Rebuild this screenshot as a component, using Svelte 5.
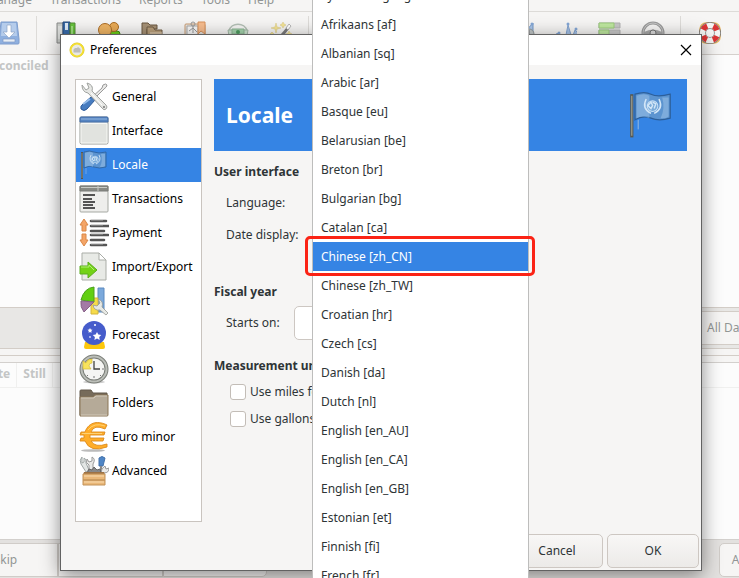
<script>
	const menus = ['Manage', 'Transactions', 'Reports', 'Tools', 'Help']

	const tools = [
		'save', '|',
		'books', 'users', 'categories', 'board', 'budget', 'wand', '|',
		'chart', 'chart', 'chart', 'chart', '|',
		'scale', 'chart', 'bars', 'wheel', '|',
		'buoy'
	]

	const pages = [
		['General', 'general'],
		['Interface', 'interface'],
		['Locale', 'flag'],
		['Transactions', 'transactions'],
		['Payment', 'payment'],
		['Import/Export', 'transfer'],
		['Report', 'report'],
		['Forecast', 'forecast'],
		['Backup', 'backup'],
		['Folders', 'folder'],
		['Euro minor', 'euro'],
		['Advanced', 'advanced']
	]

	const languages = [
		'System language', 'Afrikaans [af]', 'Albanian [sq]', 'Arabic [ar]', 'Basque [eu]',
		'Belarusian [be]', 'Breton [br]', 'Bulgarian [bg]', 'Catalan [ca]', 'Chinese [zh_CN]',
		'Chinese [zh_TW]', 'Croatian [hr]', 'Czech [cs]', 'Danish [da]', 'Dutch [nl]',
		'English [en_AU]', 'English [en_CA]', 'English [en_GB]', 'Estonian [et]', 'Finnish [fi]',
		'French [fr]'
	]

	let page = $state('Locale')
	let language = $state('Chinese [zh_CN]')
	let day = $state(1)
	let miles = $state(false)
	let gallons = $state(false)

	// toolbar icons, 24x24
	const toolIcons = {
		save: `<path d="M4 1h16l2 17v4q0 1-1 1H3q-1 0-1-1v-4z" fill="#8fb0df" stroke="#7f9dcc"/><path d="M5 2h14l1 13H4z" fill="#b5cceb"/><path d="M10 4h4v7h4l-6 6-6-6h4z" fill="#fff" stroke="#8ea5c5" stroke-width=".7"/><path d="M6 18h12v3H6z" fill="#e8eef5" stroke="#7f9ac4" stroke-width=".7"/>`,
		books: `<path d="M3 2h6v20H3z" fill="#c9ccc8" stroke="#888"/><path d="M5 5v13M7 5v13" stroke="#eee"/><path d="M9 1h7v22H9z" fill="#396aa8" stroke="#24497a"/><path d="M11 2h3v7h-3z" fill="#dce8f5"/><path d="M16 2h5v20h-5z" fill="#65c33b" stroke="#558c37"/><path d="M18 5v15" stroke="#d4f5bd"/>`,
		users: `<rect x="12" y="10" width="11" height="10" rx="3" fill="#6cd018" stroke="#3c8d0c"/><circle cx="17" cy="6" r="4.500" fill="#e9aa55" stroke="#a96c22"/><rect x="1" y="15" width="14" height="8" rx="3" fill="#6ca1da" stroke="#3f6ea8"/><circle cx="8" cy="9" r="6.500" fill="#efb565" stroke="#ac6d26"/>`,
		categories: `<path d="M2 18V2h6l2 2h7v4H7v10z" fill="#a69175" stroke="#695641"/><path d="M7 22V6h6l2 3h7v13z" fill="#b99f7b" stroke="#705c44"/><path d="M10 12h12M10 14h12" stroke="#e7d7c0"/>`,
		board: `<rect x="2" y="3" width="20" height="19" rx="1" fill="#e6e3df" stroke="#c99b72"/><path d="M4 5h11v15H4z" fill="#f8f8f8" stroke="#aaa"/><circle cx="10" cy="3" r="2" fill="none" stroke="#999"/><path d="M10 5v7M6 10l4-3 4 4" fill="none" stroke="#999"/><path d="M15 1h7v12l-4-3-3 3z" fill="#f7bd8f" stroke="#d8925d"/>`,
		budget: `<path d="M3 10C5 1 19 1 21 10" fill="none" stroke="#b3bfb5" stroke-width="1.500"/><path d="M2 9h20l-2 12H4z" fill="#cfe6d2" stroke="#a4b9a7"/><path d="M6 8h12v5H6z" fill="#a5d4ad" stroke="#8db694"/><circle cx="12" cy="11" r="2" fill="#4f9c60"/>`,
		wand: `<path d="m5 21 13-15 2 2L8 23z" fill="#7c7c7c"/><path d="m17 7 3-4 2 2-3 4z" fill="#fff" stroke="#999" stroke-width=".7"/><path d="m7 2 1 4 4 1-4 1-1 4-1-4-4-1 4-1zM14 1l1 2 2 1-2 1-1 2-1-2-2-1 2-1zM20 10l1 2 2 1-2 1-1 2-1-2-2-1 2-1zM3 11l1 1 1 1-1 1-1 1-1-1-1-1 1-1z" fill="#f5e493" stroke="#d8c67c" stroke-width=".5"/>`,
		chart: `<path d="M1 21v-8l3-1 3 5 4-3L13 4l4 13 3-8 2 2v10z" fill="#a5c2e7"/><path d="m1 13 3-1 3 5 4-3L13 4l4 13 3-8 2 2" fill="none" stroke="#83a3cf"/><circle cx="13" cy="3" r="1.500" fill="#83a6d5"/><circle cx="21" cy="8" r="1.500" fill="#83a6d5"/><circle cx="4" cy="12" r="1.500" fill="#83a6d5"/>`,
		scale: `<path d="M3 22 21 2v20z" fill="#a8c5ea" stroke="#7597c3"/><circle cx="20" cy="3" r="1.500" fill="#83a6d5"/><circle cx="17" cy="13" r="5" fill="#c2c7c8" stroke="#92999a"/><path d="M17 9v5h4" fill="none" stroke="#777"/>`,
		bars: `<path d="M1 2h21v5H1zM1 9h21v5H1zM1 16h21v5H1z" fill="#c8c8c8" stroke="#b3b3b3"/><path d="M1 2h15v5H1zM1 9h10v5H1zM1 16h18v5H1z" fill="#bfe8a0" stroke="#9ccc7c"/>`,
		wheel: `<circle cx="12" cy="12" r="10" fill="none" stroke="#9b9b9b" stroke-width="3"/><circle cx="12" cy="12" r="10" fill="none" stroke="#c7c7c7"/><path d="M3 11q9-5 18 0v3l-6 1-2 7h-2l-2-7-6-1z" fill="#aaa"/><circle cx="12" cy="12" r="3" fill="#ddd" stroke="#777"/>`,
		buoy: `<rect x="2" y="2" width="20" height="20" rx="6" fill="none" stroke="#edb65c" stroke-width="1.500"/><circle cx="12" cy="12" r="7.500" fill="none" stroke="#777" stroke-width="7"/><circle cx="12" cy="12" r="7.500" fill="none" stroke="#f5f5f3" stroke-width="5.500"/><circle cx="12" cy="12" r="7.500" fill="none" stroke="#db3535" stroke-width="5.500" stroke-dasharray="5.500 6.280" stroke-dashoffset="-3.200"/>`
	}

	const flag = `<path d="M2 2h2v27H2z" fill="#565852"/><path d="M3 3v25" stroke="#a3a598" stroke-width=".7"/><path d="M5 2q6-2 10 0t12 0v15q-7 2-12 0t-10 1z" fill="#5c94d0" stroke="#2c5f9b" stroke-width=".8"/><path d="M6 3q5-2 8 0v14q-4-2-8 0zM22 4q2 7-1 13h3l2-1V4z" fill="#b6d6f0" opacity=".38"/><circle cx="16" cy="9.500" r="3.300" fill="#79abd9" stroke="#c6dff5" stroke-width=".7"/><path d="M12 5q-3 6 3 9M20 5q3 6-3 9M13 9l2-2 1 2-1 2zM16 7l2 1-1 3" fill="none" stroke="#d3e6f7" stroke-width=".9"/><path d="M7 18v6" stroke="#99bce4" stroke-width=".6"/>`

	// page icons, 30x30
	const pageIcons = {
		general: `<path d="M24 3q3-2 4 0 0 2-3 4L14 18l-2-2L23 6z" fill="#e9e9e7" stroke="#999"/><path d="m12 15 4 3-8 9q-3 3-6 0-1-3 2-5z" fill="#467cc0" stroke="#2c5a98"/><path d="m4 22 7-5" stroke="#96bce8" stroke-width="2"/><path d="M3 3q0 7 6 8l14 15q2 3 4 1t0-4L13 9q2-6-5-8l2 5-3 2z" fill="#e6e7e4" stroke="#a0a3a0"/><circle cx="25" cy="25" r="1" fill="#777"/><path d="m12 11 11 12" stroke="#fff"/>`,
		interface: `<rect x="1" y="1" width="28" height="27" rx="1.500" fill="#e1e3df" stroke="#999c97"/><path d="M1 6V2q0-1 1-1h26q1 0 1 1v4z" fill="#5685c2" stroke="#446fa9"/><path d="M2 3h26" stroke="#94b7e0"/><path d="M2 7.500h26V27H2z" fill="none" stroke="#f7f8f5"/>`,
		flag,
		transactions: `<rect x="1" y="2" width="28" height="26" rx="1" fill="#eeeeec" stroke="#a6a9a3"/><path d="M1 2h28v5H1z" fill="#888a85" stroke="#797b76"/><path d="M19 2v5M2 3.500h26" stroke="#c8cac5"/><path d="M4 11h12M4 15h9M4 18h12M4 21h10M4 24h12" stroke="#222" stroke-width="1.600"/>`,
		payment: `<path d="m5 1 4 6H7v6H3V7H1zM3 16h4v6h2l-4 6-4-6h2z" fill="#f4a567" stroke="#da8848" stroke-linejoin="round"/><path d="M12 3h15M12 8h18M12 13h13M12 17h17M12 22h13M12 27h15" stroke="#555" stroke-width="2.600" stroke-linecap="round"/><path d="M12 2.500h12M12 7.500h12M12 16.500h12M12 26.500h12" stroke="#999" stroke-width=".6"/>`,
		transfer: `<path d="M3 1h17l7 7v20H3z" fill="#e8eae6" stroke="#aaada7"/><path d="M20 1v7h7z" fill="#fff" stroke="#aaada7"/><path d="M1 14h8v-4l9 8-9 8v-4H1z" fill="#73d216" stroke="#5bad1c"/><path d="M2 15h8v-2l5 5" fill="none" stroke="#b1ef75"/>`,
		report: `<path d="M19 2h6v24h-6z" fill="#7ba9dc" stroke="#5c8ac0"/><path d="M12 12h7v16h-7z" fill="#f6db4a" stroke="#d4b63c"/><path d="M15 16V1Q5 2 2 14z" fill="#62cf12" stroke="#4aa01c"/><path d="M15 16 2 15q-1 6 3 11z" fill="#a47aa5" stroke="#876088"/><path d="m19 13 2 4-3 3-4-1q1 6 7 5l6 5 2-2-6-6q2-6-4-8z" fill="#e7e9e5" stroke="#959893" stroke-width=".8"/>`,
		forecast: `<path d="M6 22h19l1 5q0 2-2 2H7q-2 0-2-2z" fill="#fdc70c"/><circle cx="15" cy="13" r="12" fill="#465ccb"/><path d="m18 12 1.300 2.600 3 .4-2.100 2 .5 3-2.700-1.400-2.600 1.400.5-3-2.200-2 3-.4zM11 8l.8 1.500 1.700.3-1.200 1.200.3 1.700-1.600-.8-1.500.8.3-1.700L8.500 9.800l1.700-.3z" fill="#fff"/><circle cx="16" cy="5" r="1" fill="#fff"/><circle cx="11" cy="17" r=".9" fill="#d5dafb"/>`,
		backup: `<ellipse cx="15" cy="28" rx="11" ry="1.500" fill="#ccc"/><circle cx="15" cy="15" r="12.500" fill="#f5f5f3" stroke="#7a7d77" stroke-width="4"/><circle cx="15" cy="15" r="12.500" fill="none" stroke="#bbbeb8" stroke-width="2"/><path d="M15 7v8h6" fill="none" stroke="#444" stroke-width="1.300"/><path d="M15 22v2M23 15h2M22 22l-1-1M8 22l1-1" stroke="#777"/><path d="M13 5q-5 0-6 4L4 7v8h8l-2-3q0-3 3-3z" fill="#f8e35d" stroke="#d4bb3a" stroke-width=".7"/>`,
		folder: `<path d="M1 27V3q0-1 1-1h10l2 3h14v5z" fill="#766b5a" stroke="#62594b"/><path d="M1 9h13l2-2h13v20q0 1-1 1H1z" fill="#b5aa98" stroke="#8b7657"/><path d="M2 10h13l2-2h11M2 27h26" fill="none" stroke="#d1c8b9"/>`,
		euro: `<ellipse cx="14" cy="28.500" rx="12" ry="1.300" fill="#bbb"/><path d="M28 3l-2 4Q15 2 12 10h14l-1 3H11v3h14l-1 3H12q4 7 16 3v3q-17 6-22-6H1l1-3h3v-3H1l1-3h4C10-1 20-1 28 3z" fill="#ffad28" stroke="#dd8a1c" stroke-width=".9" stroke-linejoin="round"/><path d="M9 8q6-8 17-4M3 11.500h20" fill="none" stroke="#ffdb86" stroke-width=".8"/>`,
		advanced: `<path d="M3 1q-3 3-1 7l5 8 3-2-3-7q1-4-2-5v4l-2 1z" fill="#e3e6e5" stroke="#a0a7a6"/><path d="m8 3 2 3 3-1V1q4 2 1 7v7h-4V9Q6 7 8 3z" fill="#e9e9e7" stroke="#999"/><path d="M20 2q3-3 6 0l-2 8h-4z" fill="#4f86c6" stroke="#4271aa"/><path d="M22 10v7" stroke="#888" stroke-width="2"/><path d="m26 10 1 3 3-1q0 5-5 5h-3q0-5 4-7z" fill="#e9e9e7" stroke="#999"/><path d="M8 17l2-4 3 1 2-3 3 3 3-1 1 4z" fill="#888" stroke="#666"/><path d="m5 16-1 3h22l-1-3z" fill="#9d7245"/><path d="M4 18h22v6H4zM4 24h22v5H4z" fill="#eab879" stroke="#c29259"/><path d="M5 20h20M5 26h20" stroke="#f9dcb2"/>`
	}
</script>

<div class="app">
	<div class="main" inert>
		<nav class="menubar">
			{#each menus as menu}
				<button>{menu}</button>
			{/each}
		</nav>
		<div class="toolbar">
			{#each tools as tool}
				{#if tool === '|'}
					<span class="sep"></span>
				{:else}
					<button aria-label={tool}><svg viewBox="0 0 24 24" width="24" height="24">{@html toolIcons[tool]}</svg></button>
				{/if}
			{/each}
		</div>
		<div class="accounts">
			<strong>Reconciled</strong>
		</div>
		<div class="filter">
			<button>All Dates</button>
		</div>
		<div class="gap"></div>
		<div class="upcoming">
			<div class="columns">
				<strong>Late</strong>
				<strong>Still</strong>
			</div>
		</div>
		<div class="actions">
			<button class="skip">Skip</button>
			<button class="edit">Edit</button>
			<button class="post">Post</button>
			<span class="grow"></span>
			<button class="add">Add</button>
		</div>
	</div>

	<div class="dialog" role="dialog" aria-labelledby="title">
		<header>
			<svg viewBox="0 0 16 16" width="16" height="16">
				<circle cx="8" cy="8" r="7" fill="#e9e9e3" stroke="#d8c51c" />
				<circle cx="8" cy="8" r="6.200" fill="none" stroke="#f5df2e" stroke-width="1.600" />
				<path d="M4.500 7.500 6 6h2l1-1 2.500 2v3.500h-7z" fill="#bcbcb9" />
			</svg>
			<span id="title">Preferences</span>
			<button class="close" aria-label="Close">
				<svg viewBox="0 0 12 12" width="12" height="12"><path d="m1 1 10 10M11 1 1 11" stroke="#000" stroke-width="1.200" /></svg>
			</button>
		</header>

		<div class="body">
			<nav class="pages">
				{#each pages as [name, icon]}
					<button class:active={page === name} onclick={() => page = name}>
						<svg viewBox="0 0 30 30" width="30" height="30">{@html pageIcons[icon]}</svg>
						{name}
					</button>
				{/each}
			</nav>

			<section>
				<div class="banner">
					<h1>{page}</h1>
					<svg viewBox="0 0 30 30" width="48" height="48">{@html flag}</svg>
				</div>

				<h2>User interface</h2>
				<div class="row">
					<label for="language">Language:</label>
					<select id="language" bind:value={language}>
						{#each languages as lang}
							<option>{lang}</option>
						{/each}
					</select>
				</div>
				<div class="row">
					<label for="date">Date display:</label>
					<input id="date" type="text" value="%x">
				</div>

				<h2 class="fiscal">Fiscal year</h2>
				<div class="row start">
					<label for="day">Starts on:</label>
					<input id="day" class="day" type="text" bind:value={day}>
				</div>

				<h2 class="units">Measurement units</h2>
				<label class="check"><input type="checkbox" bind:checked={miles}>Use miles for meter</label>
				<label class="check"><input type="checkbox" bind:checked={gallons}>Use gallons for fuel</label>
			</section>
		</div>

		<footer>
			<button>Cancel</button>
			<button>OK</button>
		</footer>
	</div>

	<ul class="popup" role="listbox" aria-label="Language">
		{#each languages as lang}
			<li role="option" aria-selected={language === lang}>
				<button onclick={() => language = lang}>{lang}</button>
			</li>
		{/each}
	</ul>
</div>

<style>
:global(body) {
	background: #f6f5f4;
}
.app {
	position: relative;
	height: 100vh;
	overflow: hidden;
	font: 12px/18px 'Noto Sans', 'Open Sans', sans-serif;
	color: #2e3436;
}
.app * {
	box-sizing: border-box;
}
button {
	font: inherit;
	color: inherit;
	background: none;
	border: 0;
	padding: 0;
}
svg {
	display: block;
	flex: none;
}

.main {
	display: flex;
	flex-direction: column;
	height: 100%;
	color: #929595;
	background: #f6f5f4;
}
.menubar {
	display: flex;
	gap: 18px;
	height: 12px;
	margin-left: -14px;
	border-bottom: 1px solid #dddbd8;
}
.menubar button {
	height: 18px;
	margin-top: -9px;
}
.toolbar {
	display: flex;
	align-items: center;
	height: 43px;
	margin-left: -13px;
	border-bottom: 1px solid #d5d0cc;
}
.toolbar button {
	display: flex;
	flex: none;
	justify-content: center;
	width: 43px;
}
.sep {
	flex: none;
	width: 1px;
	height: 34px;
	margin: 0 7px 0 6px;
	background: #dddbd8;
}
.accounts {
	flex: 252;
	margin-left: -16px;
	padding-top: 2px;
	background: #fcfcfc;
	color: #c3c5c5;
}
.filter {
	display: flex;
	justify-content: flex-end;
	height: 42px;
	padding: 3px 0;
	background: #e8e7e5;
	border: solid #d3cdc7;
	border-width: 1px 0;
}
.filter button {
	width: 120px;
	margin-right: -32px;
	padding-left: 55px;
	text-align: left;
	background: #f6f5f4;
	border: 1px solid #d3cdc7;
}
.gap {
	height: 7px;
	border-bottom: 1px solid #d3cdc7;
}
.upcoming {
	flex: 178;
	margin-top: 6px;
	background: #fcfcfc;
	border: solid #d3d0cd;
	border-width: 1px 0;
}
.columns {
	display: flex;
	height: 25px;
	margin-left: -22px;
	color: #c3c5c5;
	border-bottom: 1px solid #f0f0ef;
}
.columns strong {
	padding: 2px 6px;
	border-right: 1px solid #f0f0ef;
}
.actions {
	display: flex;
	height: 38px;
	padding: 3px 0 1px;
	background: #e3e1df;
}
.actions button {
	background: #f6f5f4;
	border: 1px solid #d0ccc8;
}
.skip {
	width: 105px;
	margin-left: -47px;
}
.edit {
	width: 105px;
}
.actions .post {
	width: 104px;
	border-radius: 0 5px 5px 0;
}
.grow {
	flex: 1;
}
.actions .add {
	width: 48px;
	margin-right: -28px;
	border-radius: 5px;
}

.dialog {
	position: absolute;
	top: 34px;
	left: 60px;
	right: 37px;
	background: #f6f5f4;
	border: 1px solid #626262;
	box-shadow: 0 4px 18px rgba(0, 0, 0, .45);
}
header {
	display: flex;
	align-items: center;
	gap: 5px;
	height: 30px;
	padding: 0 9px 1px 8px;
	color: #000;
	background: #fff;
}
.close {
	margin-left: auto;
}
.body {
	display: flex;
	gap: 12px;
	padding: 14px 14px 12px;
}
.pages {
	flex: none;
	width: 127px;
	height: 443px;
	color: #000;
	background: #fff;
	border: 1px solid #c9c4bf;
}
.pages button {
	display: flex;
	align-items: center;
	gap: 3px;
	width: 100%;
	height: 34px;
	padding-left: 3px;
	white-space: nowrap;
}
.pages .active {
	color: #fff;
	background: #3584e4;
}
section {
	flex: 1;
	min-width: 0;
}
.banner {
	display: flex;
	align-items: center;
	justify-content: space-between;
	height: 72px;
	padding: 0 12px;
	color: #fff;
	background: #3584e4;
}
h1 {
	margin: 0;
	font-size: 21px;
	line-height: 28px;
}
h2 {
	margin: 12px 0 6px;
	font-size: 12px;
	line-height: 18px;
	white-space: nowrap;
}
.row {
	display: flex;
	align-items: center;
	gap: 4px;
	height: 32px;
	padding-left: 12px;
}
.row label {
	flex: none;
	width: 84px;
}
.row select, .row input {
	width: 200px;
	height: 28px;
	font: inherit;
	background: #fff;
	border: 1px solid #cdc7c2;
	border-radius: 5px;
}
.fiscal {
	margin-top: 32px;
}
.start label {
	width: 64px;
}
.row .day {
	width: 120px;
	height: 34px;
	padding: 0 24px;
}
.units {
	margin: 18px 0 3px;
}
.check {
	display: flex;
	align-items: center;
	gap: 4px;
	height: 27px;
	padding-left: 16px;
	white-space: nowrap;
}
.check input {
	appearance: none;
	width: 16px;
	height: 16px;
	margin: 0;
	background: #fff;
	border: 1px solid #c3bdb7;
	border-radius: 3px;
}
footer {
	display: flex;
	justify-content: flex-end;
	gap: 4px;
	padding: 0 2px 2px;
}
footer button {
	width: 92px;
	height: 34px;
	background: linear-gradient(#f8f7f6, #eceae8);
	border: 1px solid #cdc7c2;
	border-radius: 5px;
}

.popup {
	position: absolute;
	top: -19px;
	left: 312px;
	width: 217px;
	margin: 0;
	padding: 0;
	list-style: none;
	background: #fff;
	border: solid #bdbdbc;
	border-width: 0 1px;
}
.popup li {
	position: relative;
	height: 29px;
}
.popup button {
	width: 100%;
	height: 29px;
	padding-left: 8px;
	text-align: left;
}
.popup [aria-selected='true'] {
	color: #fff;
	background: #3584e4;
}
.popup [aria-selected='true']::after {
	content: '';
	position: absolute;
	inset: -6px -7px -5px -8px;
	border: 3px solid #fb2315;
	border-radius: 5px;
	pointer-events: none;
}
</style>
